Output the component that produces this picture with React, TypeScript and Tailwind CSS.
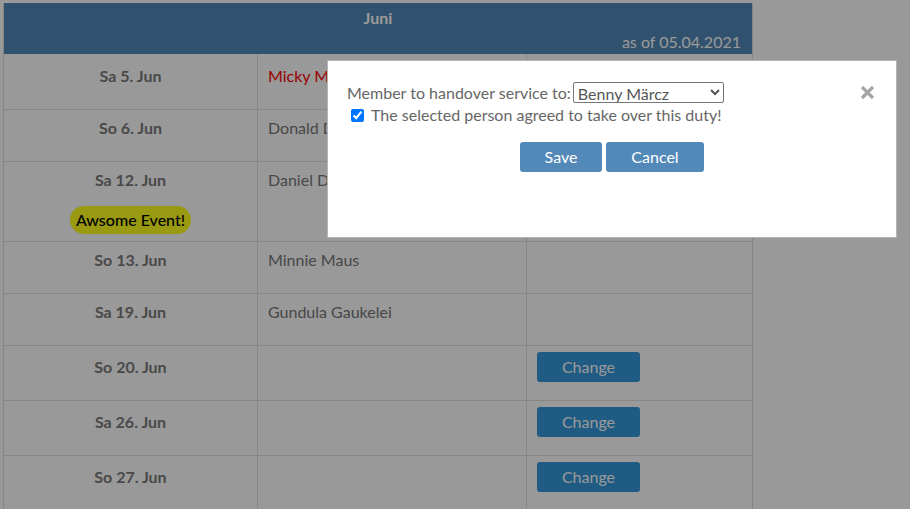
import React from "react";

const rows = [
  { date: "Sa 5. Jun", name: "Micky Maus", red: true, change: false, event: false, h: "h-[56px]", pt: "pt-[10px]", dpt: "pt-[10px]" },
  { date: "So 6. Jun", name: "Donald Duck", red: false, change: false, event: false, h: "h-[52px]", pt: "pt-[6px]", dpt: "pt-[6px]" },
  { date: "Sa 12. Jun", name: "Daniel Düsentrieb", red: false, change: false, event: true, h: "h-[80px]", pt: "pt-[6px]", dpt: "pt-[6px]" },
  { date: "So 13. Jun", name: "Minnie Maus", red: false, change: false, event: false, h: "h-[52px]", pt: "pt-[6px]", dpt: "pt-[6px]" },
  { date: "Sa 19. Jun", name: "Gundula Gaukelei", red: false, change: false, event: false, h: "h-[52px]", pt: "pt-[6px]", dpt: "pt-[6px]" },
  { date: "So 20. Jun", name: "", red: false, change: true, event: false, h: "h-[55px]", pt: "pt-[6px]", dpt: "pt-[9px]" },
  { date: "Sa 26. Jun", name: "", red: false, change: true, event: false, h: "h-[55px]", pt: "pt-[6px]", dpt: "pt-[9px]" },
  { date: "So 27. Jun", name: "", red: false, change: true, event: false, h: "h-[55px]", pt: "pt-[6px]", dpt: "pt-[9px]" },
];

const App = () => {
  return (
    <div className="min-h-[509px] bg-white font-['Lato','Noto_Sans',sans-serif] text-[16px] leading-6">
      <div className="pl-[3px] pt-[3px]">
        <div className="w-[750px] border-x border-[#e2e2e2]">
          <div className="h-[51px] bg-[#5389b8] text-white">
            <div className="pt-[3px] text-center font-bold">Juni</div>
            <div className="pr-[11px] text-right">as of 05.04.2021</div>
          </div>

          {rows.map((row) => (
            <div
              key={row.date}
              className={`grid grid-cols-[254px_269px_1fr] border-b border-[#e2e2e2] ${row.h}`}
            >
              <div className={`flex flex-col items-center border-r border-[#e2e2e2] ${row.dpt}`}>
                <div className="font-bold text-[#7a7a7a]">{row.date}</div>
                {row.event && (
                  <div className="mt-[14px] flex h-[28px] items-center rounded-full bg-[#ffff1e] px-[6px] font-medium text-black">
                    Awsome Event!
                  </div>
                )}
              </div>
              <div className={`border-r border-[#e2e2e2] pl-[10px] ${row.pt}`}>
                <span className={row.red ? "text-[#ff0000]" : "text-[#777]"}>{row.name}</span>
              </div>
              <div className={`pl-[10px] ${row.pt}`}>
                {row.change && (
                  <button className="h-[30px] w-[103px] rounded-[3px] bg-[#3498db] text-white">
                    Change
                  </button>
                )}
              </div>
            </div>
          ))}
        </div>
      </div>

      <div className="fixed inset-0 bg-black/40" />

      <div className="fixed left-[327px] top-[60px] h-[178px] w-[570px] border border-[#b5b5b5] bg-white px-[19px] pt-[21px] text-[#666]">
        <div className="flex h-[21px] items-center">
          <span>Member to handover service to:</span>
          <select
            defaultValue="Benny Märcz"
            className="ml-[2px] h-[21px] w-[151px] rounded-[2px] border border-[#767676] bg-white text-[#555]"
          >
            <option>Benny Märcz</option>
            <option>Minnie Maus</option>
            <option>Gundula Gaukelei</option>
          </select>
        </div>
        <div className="mt-[2px] flex h-[20px] items-center">
          <label className="flex items-center">
            <input type="checkbox" defaultChecked className="ml-[4px] mr-[7px] h-[13px] w-[13px]" />
            The selected person agreed to take over this duty!
          </label>
        </div>
        <div className="mt-[17px] flex justify-center gap-[4px]">
          <button className="h-[30px] w-[82px] rounded-[3px] bg-[#5389b8] text-white">Save</button>
          <button className="h-[30px] w-[98px] rounded-[3px] bg-[#5389b8] text-white">Cancel</button>
        </div>

        <button className="absolute right-[21px] top-[24px] p-0">
          <svg width="15" height="15" viewBox="0 0 15 15">
            <path d="M2 2 L13 13 M13 2 L2 13" stroke="#a6a6a6" strokeWidth="3.2" strokeLinecap="butt" />
          </svg>
        </button>
      </div>
    </div>
  );
};

export default App;
